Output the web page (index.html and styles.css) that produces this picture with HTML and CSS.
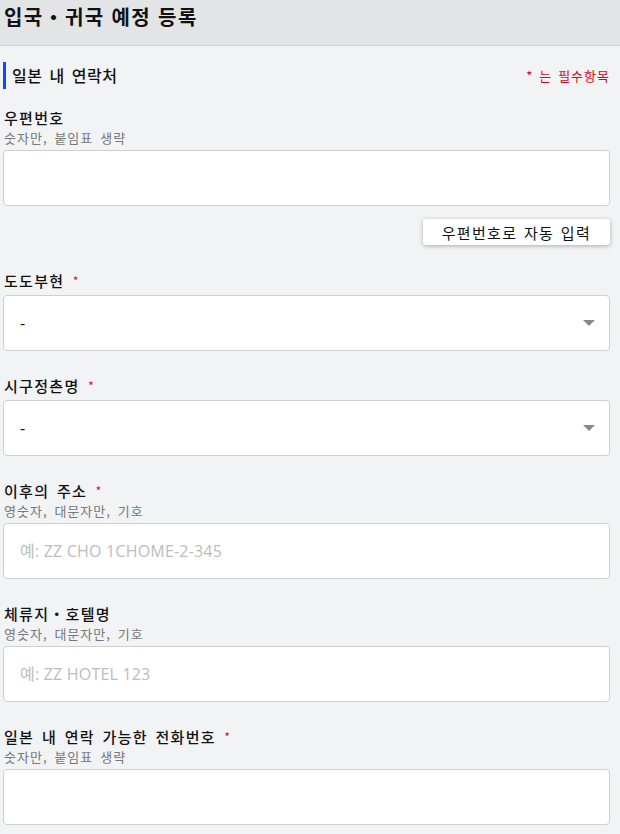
FILE: index.html
```html
<html>

<head>
    <meta charset="utf-8">
    <link rel="stylesheet" href="styles.css">
</head>

<body>
    <header class="topbar">
        <h1>입국・귀국 예정 등록</h1>
    </header>

    <main class="form">
        <div class="section-head">
            <h2>일본 내 연락처</h2>
            <span class="req-note">* 는 필수항목</span>
        </div>

        <div class="field">
            <label>우편번호</label>
            <p class="hint">숫자만, 붙임표 생략</p>
            <input type="text" class="box">
        </div>
        <div class="actions">
            <button class="btn">우편번호로 자동 입력</button>
        </div>

        <div class="field">
            <label>도도부현 <span class="star">*</span></label>
            <div class="box select">
                <span>-</span>
                <span class="caret"></span>
            </div>
        </div>

        <div class="field">
            <label>시구정촌명 <span class="star">*</span></label>
            <div class="box select">
                <span>-</span>
                <span class="caret"></span>
            </div>
        </div>

        <div class="field">
            <label>이후의 주소 <span class="star">*</span></label>
            <p class="hint">영숫자, 대문자만, 기호</p>
            <input type="text" class="box" placeholder="예: ZZ CHO 1CHOME-2-345">
        </div>

        <div class="field">
            <label>체류지・호텔명</label>
            <p class="hint">영숫자, 대문자만, 기호</p>
            <input type="text" class="box" placeholder="예: ZZ HOTEL 123">
        </div>

        <div class="field">
            <label>일본 내 연락 가능한 전화번호 <span class="star">*</span></label>
            <p class="hint">숫자만, 붙임표 생략</p>
            <input type="text" class="box">
        </div>
    </main>
</body>

</html>
```

FILE: styles.css
```css
body {
    margin: 0;
    background-color: #f2f3f5;
    font-family: "Noto Sans CJK KR", "Noto Sans", sans-serif;
    color: #111;
}

.topbar {
    height: 46px;
    background-color: #e3e4e6;
    border-bottom: 1px solid #d2d3d5;
    box-sizing: border-box;
    padding: 3px 4px 0;
}

.topbar h1 {
    margin: 0;
    font-size: 20px;
    line-height: 28px;
    font-weight: bold;
    letter-spacing: 1.4px;
    word-spacing: 1px;
}

.form {
    padding: 16px 10px 0 3px;
}

.section-head {
    display: flex;
    align-items: center;
    justify-content: space-between;
}

.section-head h2 {
    margin: 0;
    font-size: 16px;
    line-height: 27px;
    font-weight: 500;
    border-left: 3px solid #0a4cff;
    padding-left: 6px;
    letter-spacing: 0.5px;
    word-spacing: 3px;
}

.req-note {
    color: #e60012;
    font-size: 13px;
    letter-spacing: 1px;
    word-spacing: 2px;
}

.field {
    margin-top: 19px;
}

.field + .field {
    margin-top: 25px;
}

.actions + .field {
    margin-top: 26px;
}

.field label {
    display: block;
    margin-left: 1px;
    font-size: 15px;
    line-height: 20px;
    font-weight: 500;
    letter-spacing: 1.3px;
    word-spacing: 3px;
}

.star {
    color: #e8004c;
    font-size: 11px;
    line-height: 0;
    vertical-align: 2px;
    margin-left: 1px;
}

.hint {
    margin: 0 0 0 1px;
    font-size: 13px;
    line-height: 19px;
    color: #777;
    letter-spacing: 1px;
    word-spacing: 3px;
}

.box {
    display: block;
    width: 100%;
    height: 56px;
    margin-top: 3px;
    box-sizing: border-box;
    border: 1px solid #cfcfcf;
    border-radius: 4px;
    background-color: #fff;
    padding: 0 16px;
    font-family: "Open Sans", "Noto Sans CJK KR", sans-serif;
    font-size: 16px;
    letter-spacing: 0.2px;
}

.box::placeholder {
    color: #bcbcbc;
}

.select {
    display: flex;
    align-items: center;
    justify-content: space-between;
    margin-top: 4px;
    color: #111;
}

.caret {
    width: 0;
    height: 0;
    border-left: 6px solid transparent;
    border-right: 6px solid transparent;
    border-top: 6px solid #888;
    margin-right: -2px;
}

.actions {
    display: flex;
    justify-content: flex-end;
    margin-top: 13px;
}

.btn {
    height: 26px;
    padding: 0 19px;
    background-color: #fff;
    border: none;
    border-radius: 3px;
    box-shadow: 0 1px 4px rgba(0, 0, 0, 0.3);
    font-family: "Noto Sans CJK KR", sans-serif;
    font-size: 15px;
    color: #111;
    letter-spacing: 1.3px;
    word-spacing: 2px;
}
```
